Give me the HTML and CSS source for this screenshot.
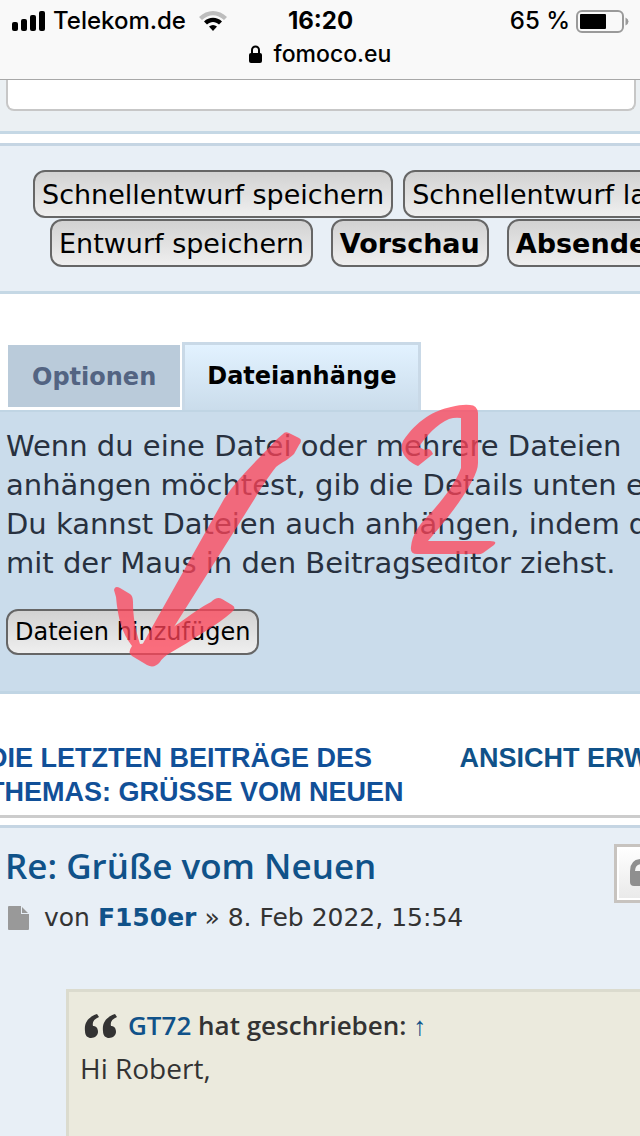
FILE: index.html
```html
<!DOCTYPE html>
<html lang="de">
<head>
    <meta charset="UTF-8">
    <meta name="viewport" content="width=device-width, initial-scale=1.0">
    <title>fomoco.eu</title>
    <link rel="stylesheet" href="styles.css">
</head>
<body>
    <header class="browser-bar">
        <div class="status">
            <div class="carrier">
                <svg class="signal" width="34" height="20" viewBox="0 0 34 20">
                    <rect x="0" y="11" width="6" height="9" rx="2"/>
                    <rect x="9" y="8" width="6" height="12" rx="2"/>
                    <rect x="18" y="4" width="6" height="16" rx="2"/>
                    <rect x="27" y="0" width="6" height="20" rx="2"/>
                </svg>
                <span>Telekom.de</span>
                <svg class="wifi" width="28" height="20" viewBox="0 0 28 20">
                    <path d="M0 6C8-2 20-2 28 6L25 9C18 2.500 10 2.500 3 9Z" fill="#bdbdbd"/>
                    <path d="M5 10.500C10 5.500 18 5.500 23 10.500L20 13.500C16.500 10 11.500 10 8 13.500Z"/>
                    <path d="M10 15.500C12.500 13.500 15.500 13.500 18 15.500L14 20Z"/>
                </svg>
            </div>
            <span class="clock">16:20</span>
            <div class="battery">
                <span>65 %</span>
                <svg width="53" height="23" viewBox="0 0 53 23">
                    <rect x="1" y="1" width="46" height="21" rx="5" fill="none" stroke="#9a9a9a" stroke-width="2"/>
                    <rect x="4" y="4" width="26" height="15" rx="1"/>
                    <path d="M49.500 7.500Q52.500 9 52.500 11.500T49.500 15.500Z" fill="#9a9a9a"/>
                </svg>
            </div>
        </div>
        <div class="address">
            <svg width="13" height="18" viewBox="0 0 13 18">
                <path d="M3 9V5a3.500 3.500 0 0 1 7 0v4" fill="none" stroke="#000" stroke-width="2"/>
                <rect x="0" y="8" width="13" height="10" rx="2"/>
            </svg>
            <span>fomoco.eu</span>
        </div>
    </header>

    <main>
        <div class="message-box">
            <textarea class="message" aria-label="Nachricht"></textarea>
        </div>

        <!-- Buttons zum Speichern und Absenden -->
        <div class="submit-buttons">
            <div class="button-row">
                <button type="button" class="button">Schnellentwurf speichern</button>
                <button type="button" class="button">Schnellentwurf laden</button>
            </div>
            <div class="button-row second">
                <button type="button" class="button">Entwurf speichern</button>
                <button type="button" class="button bold">Vorschau</button>
                <button type="button" class="button bold">Absenden</button>
            </div>
        </div>

        <nav class="tabs">
            <a class="tab" href="#optionen">Optionen</a>
            <a class="tab active" href="#attach">Dateianhänge</a>
        </nav>

        <!-- Dateianhänge -->
        <section class="attach" id="attach">
            <p>Wenn du eine Datei oder mehrere Dateien<br>
            anhängen möchtest, gib die Details unten ein.<br>
            Du kannst Dateien auch anhängen, indem du sie<br>
            mit der Maus in den Beitragseditor ziehst.</p>
            <button type="button" class="button small">Dateien hinzufügen</button>

            <svg class="marker" width="500" height="280" viewBox="0 0 500 280">
                <path d="M283 34Q285 31 289 33L299 38Q303 40 299 45L294 54C288 60 282 62 276 67C266 80 260 90 252 103L167 238L141 247L224 99C240 75 262 56 276 40Z"/>
                <path d="M114 190Q115 185 120 188L130 194Q133 196 133 202C133 216 135 228 140 244L149 243C160 238 195 210 211 202Q217 196 222 199L232 205Q237 208 232 212C216 226 200 234 187 243L170 253Q163 257 160 262Q154 269 147 265L132 256Q127 253 132 246C122 233 118 219 116 197Z"/>
                <path d="M418 66C412 64 405 58 403 53Q400 48 403 41C417 20 435 10 451 7Q463 4 470 5Q477 5 478 13V63Q478 70 472 81C460 104 440 127 428 141H490Q498 141 494 145L483 153Q480 155 475 154H417Q410 154 411 147C412 134 420 124 427 117C442 101 455 84 461 68V18Q455 17 449 19C437 24 426 36 419 47L425 50Q430 47 433 54Z"/>
            </svg>
        </section>

        <div class="review">
            <h3>Die letzten Beiträge des<br>Themas: Grüße vom Neuen</h3>
            <a href="#review">Ansicht erweitern</a>
        </div>

        <!-- Letzter Beitrag -->
        <article class="post">
            <div class="post-head">
                <h2><a href="#post">Re: Grüße vom Neuen</a></h2>
                <button type="button" class="quote-button" aria-label="Zitieren">
                    <svg width="32" height="27" viewBox="0 0 32 27">
                        <path d="M0 12Q0 0 12 0V5Q5 5 5 12H9Q13 12 13 16V23Q13 27 9 27H4Q0 27 0 23ZM18 12Q18 0 30 0V5Q23 5 23 12H27Q31 12 31 16V23Q31 27 27 27H22Q18 27 18 23Z"/>
                    </svg>
                </button>
            </div>
            <p class="author">
                <svg width="21" height="24" viewBox="0 0 21 24">
                    <path d="M1 0H13V8H21V23Q21 24 20 24H1Q0 24 0 23V1Q0 0 1 0ZM14 1L20 7H14Z"/>
                </svg>
                <span>von <a href="#f150er">F150er</a> » 8. Feb 2022, 15:54</span>
            </p>
            <blockquote>
                <cite>
                    <svg width="34" height="26" viewBox="0 0 34 26">
                        <path d="M13 1C4 4 0 10 1 18C1 23 4 25 7 25C11 25 14 22 14 19C14 15 12 13 9 13C8 9 10 6 15 4ZM31 1C22 4 18 10 19 18C19 23 22 25 25 25C29 25 32 22 32 19C32 15 30 13 27 13C26 9 28 6 33 4Z"/>
                    </svg>
                    <span><a href="#gt72">GT72</a> hat geschrieben: <a class="arrow" href="#up">↑</a></span>
                </cite>
                <p>Hi Robert,</p>
            </blockquote>
        </article>
    </main>
</body>
</html>
```
FILE: styles.css
```css
* {
    box-sizing: border-box;
}
body {
    margin: 0;
    background-color: #fff;
    font-family: "DejaVu Sans", Verdana, sans-serif;
    color: #333;
    white-space: nowrap;
    overflow: hidden;
}
h2, h3, p {
    margin: 0;
}
a {
    color: #105289;
    text-decoration: none;
}

/* Statusleiste */
.browser-bar {
    height: 80px;
    padding-top: 6px;
    background-color: #f9f9f9;
    border-bottom: 1px solid #a8a8a8;
    font-family: Inter, sans-serif;
    font-size: 24px;
    font-weight: 500;
    line-height: 30px;
    color: #000;
}
.status {
    display: grid;
    grid-template-columns: 1fr auto 1fr;
    align-items: center;
    padding: 0 11px 0 12px;
}
.carrier, .battery, .address {
    display: flex;
    align-items: center;
}
.carrier {
    gap: 7px;
}
.wifi {
    margin-left: 6px;
}
.clock {
    font-weight: 700;
}
.battery {
    justify-content: flex-end;
    gap: 6px;
}
.address {
    justify-content: center;
    gap: 12px;
    font-size: 23px;
    line-height: 36px;
}

/* Nachrichtenfeld */
.message-box {
    padding: 0 4px 20px 6px;
    background-color: #ebf0f3;
    border-bottom: 3px solid #c5d8e5;
}
.message {
    display: block;
    width: 100%;
    height: 31px;
    border: 2px solid #c7c7c7;
    border-top: none;
    border-radius: 0 0 8px 8px;
    background-color: #fff;
    resize: none;
}

.submit-buttons {
    margin-top: 9px;
    padding: 24px 0 23px 33px;
    background-color: #e8eff6;
    border-top: 3px solid #c5d5e3;
    border-bottom: 3px solid #c5d8e5;
}
.button-row {
    display: flex;
    gap: 10px;
    margin-bottom: 1px;
}
.button-row.second {
    gap: 18px;
    padding-left: 17px;
}
.button {
    flex-shrink: 0;
    height: 48px;
    padding: 0 7px;
    border: 2px solid #666;
    border-radius: 12px;
    background: linear-gradient(#d2d2d2, #efefef);
    font-family: inherit;
    font-size: 27px;
    color: #000;
    cursor: pointer;
}
.button.bold {
    font-weight: bold;
}
.button.small {
    height: 46px;
    font-size: 24px;
}

/* Tabs */
.tabs {
    display: flex;
    align-items: flex-end;
    margin-top: 48px;
    padding-left: 8px;
}
.tab {
    height: 62px;
    margin: 0 2px 3px 0;
    padding: 0 24px;
    background-color: #bacbda;
    font-size: 24px;
    font-weight: bold;
    line-height: 64px;
    color: #536482;
}
.tab.active {
    height: 68px;
    margin-bottom: 0;
    padding: 0 22px;
    border: 3px solid #c9d9e7;
    border-bottom: none;
    background: linear-gradient(#e2f2ff, #cadceb);
    line-height: 62px;
    color: #000;
}

.attach {
    position: relative;
    height: 284px;
    padding: 15px 6px 0;
    background-color: #cadceb;
    border-top: 2px solid #c0d5e4;
    border-bottom: 3px solid #c0d5e4;
    font-size: 29px;
    line-height: 39px;
    color: #28313f;
}
.attach p {
    margin-bottom: 26px;
}
.marker {
    position: absolute;
    left: 0;
    top: -12px;
    fill: #ff4358;
    opacity: 0.75;
    pointer-events: none;
}

.review {
    display: flex;
    gap: 56px;
    margin-left: -12px;
    padding: 47px 0 6px;
    border-bottom: 3px solid #ccc;
    font-family: "Liberation Sans", Arial, sans-serif;
    font-size: 27px;
    font-weight: bold;
    line-height: 34px;
    text-transform: uppercase;
}
.review h3 {
    font-size: inherit;
    color: #115098;
}

/* Beitrag */
.post {
    margin-top: 7px;
    background-color: #e8eff6;
    border-top: 3px solid #c5d5e3;
}
.post-head {
    display: flex;
    justify-content: space-between;
    padding: 16px 0 0 5px;
}
.post h2 {
    font-family: "Open Sans", "Trebuchet MS", sans-serif;
    font-size: 35px;
    font-weight: 600;
    line-height: 44px;
}
.quote-button {
    width: 64px;
    height: 59px;
    margin-right: -38px;
    padding: 0 13px;
    border: 3px solid #c7c3bf;
    box-shadow: inset 0 0 0 2px #fff;
    background: linear-gradient(#fff, #e9e9e9);
    fill: #8f8f8f;
}
.author {
    display: flex;
    align-items: center;
    gap: 15px;
    padding-left: 8px;
    font-size: 25px;
    line-height: 30px;
}
.author svg {
    fill: #999;
}
.author a {
    font-weight: bold;
}
blockquote {
    height: 180px;
    margin: 56px 0 0 66px;
    padding: 12px 11px;
    background-color: #ebeadd;
    border: 3px solid #dbdbce;
    border-right: none;
    font-family: "Open Sans", "Trebuchet MS", sans-serif;
    font-size: 28px;
    line-height: 42px;
}
cite {
    display: flex;
    align-items: center;
    gap: 10px;
    padding-left: 4px;
    font-size: 26px;
    font-style: normal;
    font-weight: 600;
}
cite svg {
    fill: #333;
}
cite .arrow {
    font-family: "Liberation Sans", Arial, sans-serif;
    font-weight: normal;
}
```
